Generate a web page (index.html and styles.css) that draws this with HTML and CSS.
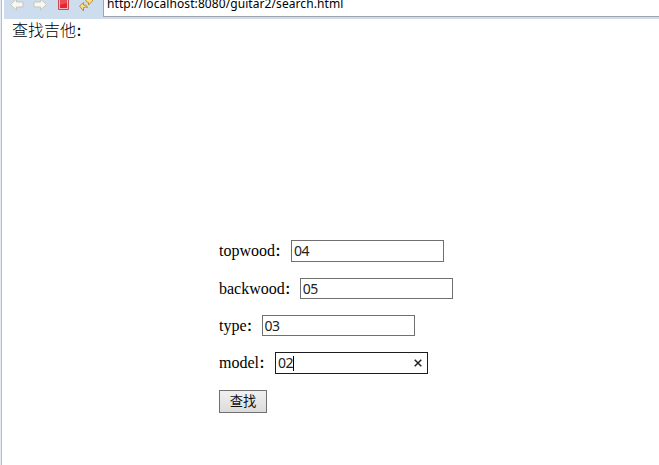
FILE: index.html
```html
<!DOCTYPE html>
<html lang="zh-CN">
<head>
<meta charset="utf-8">
<title>search</title>
<link rel="stylesheet" href="styles.css">
</head>
<body>
<div class="window">
  <header class="toolbar">
    <svg class="icons" width="99" height="18" viewBox="4 0 99 18">
      <path d="M10.500 4.500 16.500-1v3h6.500v5h-6.500v3z" fill="#f8f7f2" stroke="#c5c5c0"/>
      <path d="M46.500 4.500 40.500-1v3H34v5h6.500v3z" fill="#f8f7f2" stroke="#c5c5c0"/>
      <path d="M58.500-1.500h10v11h-10z" fill="#f7b9bc" stroke="#c64a50"/>
      <path d="M60 0h7v8h-7z" fill="#e8222e"/>
      <path d="M60 0h7v3l-7 2z" fill="#ee4a54"/>
      <path d="M79.500 6 83.500 2.500V5q3.500-.5 4 2.500-2-.8-4 0V11z" fill="#fbe08a" stroke="#b98522" stroke-width=".9"/>
      <path d="M92.500 1 88.500 5V2.500q-3 0-3-3.500h7z" fill="#fbe08a" stroke="#b98522" stroke-width=".9"/>
    </svg>
    <div class="address"><span>http://localhost:8080/guitar2/search.html</span></div>
  </header>
  <main class="page">
    <p class="title">查找吉他<span class="colon">：</span></p>
    <form class="form">
      <div class="row"><span>topwood<span class="colon">：</span></span><div class="field"><span>04</span></div></div>
      <div class="row second"><span>backwood<span class="colon">：</span></span><div class="field short"><span>05</span></div></div>
      <div class="row third"><span>type<span class="colon">：</span></span><div class="field short"><span>03</span></div></div>
      <div class="row fourth"><span>model<span class="colon">：</span></span><div class="field active"><span>02</span><i class="caret"></i>
        <svg class="clear" width="8" height="8" viewBox="0 0 8 8"><path d="M.7.7l6.600 6.600M7.300.7.7 7.300" stroke="#222" stroke-width="1.500"/></svg></div></div>
      <button class="submit" type="button">查找</button>
    </form>
  </main>
</div>
</body>
</html>
```
FILE: styles.css
```css
* { box-sizing: border-box; }
body { margin: 0; background: #e6ebf5; overflow: hidden; }
.window {
  height: 465px;
  margin-left: 1px;
  border-left: 1px solid #b4bccf;
  padding-left: 2px;
  background: #fff;
  font: 16px/22px "Liberation Serif", "Noto Sans CJK SC", serif;
  color: #000;
}
.toolbar { display: flex; height: 19px; background: #cedded; }
.icons { flex: none; }
.address {
  flex: 1;
  height: 17px;
  padding-left: 3px;
  border-left: 1px solid #a0a3aa;
  border-bottom: 1px solid #a0a3aa;
  background: #fff;
  font: 12px/16px "Noto Sans", sans-serif;
  letter-spacing: 0.08px;
  overflow: hidden;
}
.address span { display: block; margin-top: -4px; white-space: nowrap; }
.page { padding-left: 8px; }
.title { margin: 0; height: 23px; padding-top: 1px; font-weight: 300; }
.colon {
  display: inline-block;
  width: 16px;
  height: 22px;
  font-size: 12px;
  font-weight: bold;
  vertical-align: top;
  line-height: 24px;
}
.form { margin: 198px 0 0 207px; }
.row { display: flex; height: 22px; align-items: flex-start; white-space: nowrap; }
.second { margin-top: 16px; }
.third { margin-top: 15px; }
.fourth { margin-top: 15px; }
.second > .field, .third > .field { margin-left: -1px; }
.field {
  display: flex;
  align-items: center;
  width: 153px;
  height: 22px;
  padding: 0 5px 0 2px;
  border: 1px solid #707070;
  font: 14px/20px "Noto Sans", sans-serif;
  letter-spacing: -0.500px;
  color: #222;
}
.short { height: 21px; }
.active { border-color: #1c1c20; }
.caret { width: 1px; height: 15px; background: #000; }
.clear { margin-left: auto; }
.submit {
  display: block;
  width: 48px;
  height: 23px;
  margin-top: 16px;
  padding: 0 0 1px;
  border: 1px solid #707070;
  background: linear-gradient(#f0f0f0, #dcdcdc);
  font: 13.330px/20px "Noto Sans CJK SC", sans-serif;
  color: #111;
}
```
